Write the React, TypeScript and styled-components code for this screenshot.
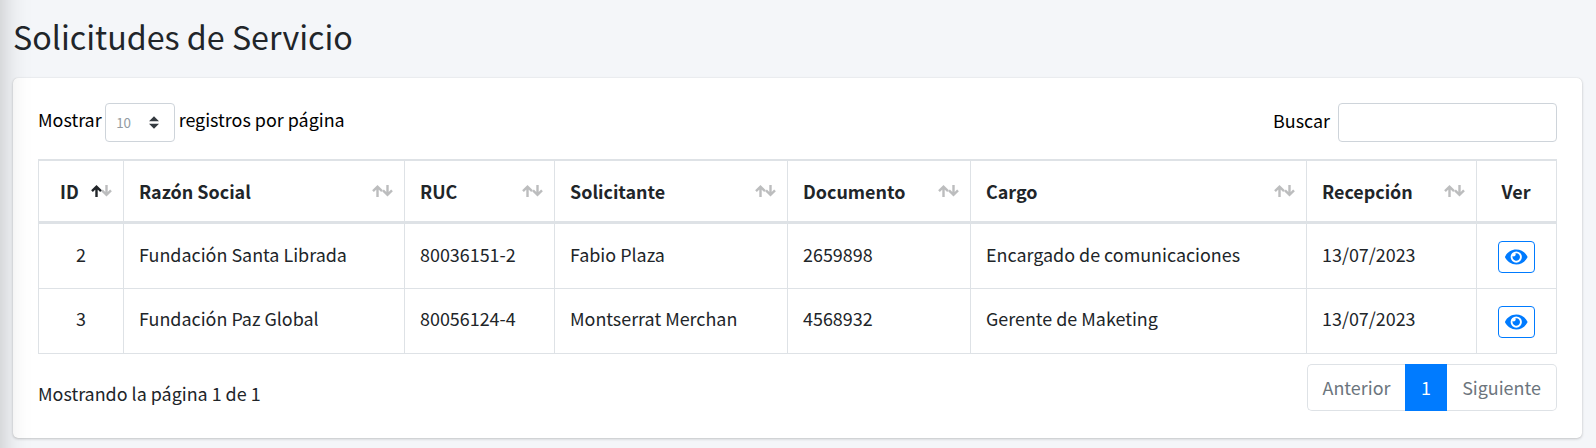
import React from "react";
import styled, { createGlobalStyle } from "styled-components";

const Global = createGlobalStyle`
  *, *::before, *::after { box-sizing: border-box; }
  html { height: 100%; }
  body {
    margin: 0;
    min-height: 100%;
    overflow: hidden;
    background: #f4f6f9;
    color: #212529;
    font-family: "Noto Sans CJK JP", "Noto Sans", sans-serif;
    font-size: 17.91px;
    line-height: 30px;
  }
`;

const Page = styled.main`
  height: 448px;
  padding: 15px 13px 0;
`;

const SidebarEdge = styled.aside`
  position: fixed;
  top: -70px;
  bottom: -200px;
  left: -251px;
  width: 250px;
  pointer-events: none;
  box-shadow: 0 14px 28px rgba(0, 0, 0, 0.25);
`;

const Title = styled.h1`
  margin: 0 0 20px;
  font-size: 32.23px;
  font-weight: 400;
  line-height: 43px;
`;

const Card = styled.section`
  width: 1569px;
  height: 360px;
  padding: 25px;
  border-radius: 5px;
  background: #fff;
  box-shadow: 0 0 1px rgba(0, 0, 0, 0.125), 0 1px 3px rgba(0, 0, 0, 0.2);
`;

const Toolbar = styled.div`
  display: flex;
  justify-content: space-between;
  height: 56px;
  color: #000;
`;

const Field = styled.label<{ $gap: number }>`
  display: flex;
  align-items: center;
  gap: ${(p) => p.$gap}px;
  height: 39px;
`;

const Caption = styled.span<{ $lift: number }>`
  padding-bottom: ${(p) => p.$lift}px;
  white-space: nowrap;
`;

const LengthSelect = styled.span`
  display: flex;
  align-items: center;
  justify-content: space-between;
  width: 70px;
  height: 39px;
  padding: 0 15px 0 10px;
  border: 1px solid #ced4da;
  border-radius: 4px;
  color: #939ba2;
  font-size: 13.4px;
`;

const LengthValue = styled.span`
  padding-bottom: 2px;
`;

const SearchInput = styled.input`
  width: 219px;
  height: 39px;
  border: 1px solid #ced4da;
  border-radius: 4px;
  background: #fff;
  outline: none;
`;

const Table = styled.table`
  width: 1519px;
  table-layout: fixed;
  border-spacing: 0;
  border: solid #dee2e6;
  border-width: 1px 1px 1px 0;
`;

const HeadCell = styled.th<{ $width: number }>`
  width: ${(p) => p.$width}px;
  height: 63px;
  padding: 0 10px 0 15px;
  border: solid #dee2e6;
  border-width: 1px 0 2px 1px;
  font-weight: 700;
  text-align: left;
`;

const HeadContent = styled.div<{ $center?: boolean; $indent?: number }>`
  display: flex;
  align-items: center;
  justify-content: ${(p) => (p.$center ? "center" : "space-between")};
  padding-left: ${(p) => p.$indent ?? 0}px;
  padding-right: ${(p) => (p.$center ? 6 : 0)}px;
`;

const Cell = styled.td<{ $center?: boolean; $action?: boolean }>`
  height: 65px;
  padding: 0 15px ${(p) => (p.$action ? 0 : 4)}px;
  border: solid #dee2e6;
  border-width: 1px 0 0 1px;
  text-align: ${(p) => (p.$center ? "center" : "left")};
  white-space: nowrap;

  tr:last-child > & {
    padding-bottom: ${(p) => (p.$action ? 0 : 6)}px;
  }
`;

const ViewButton = styled.button`
  display: inline-flex;
  align-items: center;
  justify-content: center;
  width: 37px;
  height: 32px;
  padding: 0;
  border: 1px solid #007bff;
  border-radius: 4px;
  background: transparent;
  color: #007bff;
  vertical-align: middle;
`;

const Footer = styled.footer`
  display: flex;
  justify-content: space-between;
  padding-top: 10px;
`;

const Info = styled.div`
  padding-top: 14px;
`;

const Pagination = styled.nav`
  display: flex;
  height: 47px;
`;

const PageLink = styled.button<{ $active?: boolean; $width: number; $side?: "left" | "right" }>`
  width: ${(p) => p.$width}px;
  padding: 0 0 2px;
  border: 1px solid ${(p) => (p.$active ? "#007bff" : "#dee2e6")};
  border-left-width: ${(p) => (p.$side === "right" ? 0 : 1)}px;
  border-right-width: ${(p) => (p.$side === "left" ? 0 : 1)}px;
  border-radius: ${(p) => (p.$side === "left" ? "5px 0 0 5px" : p.$side === "right" ? "0 5px 5px 0" : "0")};
  background: ${(p) => (p.$active ? "#007bff" : "#fff")};
  color: ${(p) => (p.$active ? "#fff" : "#6c757d")};
  font: inherit;
`;

const SortIcon = ({ ascending = false }: { ascending?: boolean }) => (
  <svg width="22" height="12" viewBox="0 0 22 12" fill="none" stroke="#212529" strokeWidth="2.4">
    <path d="M5.500 12V2M1 6.200L5.500 1.700L10 6.200" opacity={ascending ? 1 : 0.3} />
    <path d="M15.500 0V10M11 5.300L15.500 9.800L20 5.300" opacity="0.3" />
  </svg>
);

const SelectArrows = () => (
  <svg width="10" height="13" viewBox="0 0 4 5">
    <path fill="#343a40" d="M2 0L0 2h4zm0 5L0 3h4z" />
  </svg>
);

const EyeIcon = () => (
  <svg width="22.5" height="20" viewBox="0 0 576 512" fill="currentColor">
    <path d="M572.52 241.4C518.29 135.59 410.93 64 288 64S57.680 135.640 3.480 241.410a32.350 32.350 0 0 0 0 29.190C57.710 376.410 165.070 448 288 448s230.320-71.640 284.520-177.410a32.350 32.350 0 0 0 0-29.190zM288 400a144 144 0 1 1 144-144 143.930 143.930 0 0 1-144 144zm0-240a95.310 95.310 0 0 0-25.310 3.790 47.850 47.850 0 0 1-66.900 66.900A95.780 95.780 0 1 0 288 160z" />
  </svg>
);

const columns = [
  { label: "ID", width: 85 },
  { label: "Razón Social", width: 281 },
  { label: "RUC", width: 150 },
  { label: "Solicitante", width: 233 },
  { label: "Documento", width: 183 },
  { label: "Cargo", width: 336 },
  { label: "Recepción", width: 170 },
];

const rows = [
  ["2", "Fundación Santa Librada", "80036151-2", "Fabio Plaza", "2659898", "Encargado de comunicaciones", "13/07/2023"],
  ["3", "Fundación Paz Global", "80056124-4", "Montserrat Merchan", "4568932", "Gerente de Maketing", "13/07/2023"],
];

export default function App() {
  return (
    <>
      <Global />
      <SidebarEdge />
      <Page>
        <Title>Solicitudes de Servicio</Title>
        <Card>
          <Toolbar>
            <Field $gap={3.5}>
              <Caption $lift={7}>Mostrar</Caption>
              <LengthSelect>
                <LengthValue>10</LengthValue>
                <SelectArrows />
              </LengthSelect>
              <Caption $lift={7}>registros por página</Caption>
            </Field>
            <Field $gap={8}>
              <Caption $lift={5}>Buscar</Caption>
              <SearchInput aria-label="Buscar" />
            </Field>
          </Toolbar>
          <Table>
            <thead>
              <tr>
                {columns.map((c, i) => (
                  <HeadCell key={c.label} $width={c.width}>
                    <HeadContent $indent={i === 0 ? 6 : 0}>
                      {c.label}
                      <SortIcon ascending={i === 0} />
                    </HeadContent>
                  </HeadCell>
                ))}
                <HeadCell $width={80}>
                  <HeadContent $center>Ver</HeadContent>
                </HeadCell>
              </tr>
            </thead>
            <tbody>
              {rows.map((row) => (
                <tr key={row[0]}>
                  {row.map((value, i) => (
                    <Cell key={i} $center={i === 0}>
                      {value}
                    </Cell>
                  ))}
                  <Cell $center $action>
                    <ViewButton aria-label="Ver">
                      <EyeIcon />
                    </ViewButton>
                  </Cell>
                </tr>
              ))}
            </tbody>
          </Table>
          <Footer>
            <Info>Mostrando la página 1 de 1</Info>
            <Pagination>
              <PageLink $width={98} $side="left">Anterior</PageLink>
              <PageLink $width={42} $active>1</PageLink>
              <PageLink $width={110} $side="right">Siguiente</PageLink>
            </Pagination>
          </Footer>
        </Card>
      </Page>
    </>
  );
}
